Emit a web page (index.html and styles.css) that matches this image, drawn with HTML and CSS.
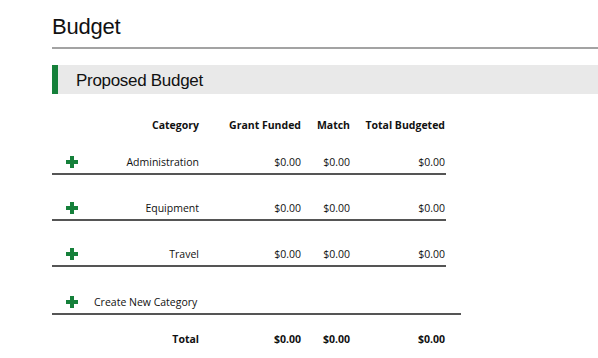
FILE: index.html
```html
<!DOCTYPE html>
<html>
<head>
<meta charset="utf-8">
<link rel="stylesheet" href="styles.css">
</head>
<body>
<div class="page">
  <h1 class="title">Budget</h1>
  <hr class="rule">
  <h2 class="section">Proposed Budget</h2>
  <div class="table">
    <div class="row head">
      <span></span>
      <span class="cat">Category</span>
      <span class="num">Grant Funded</span>
      <span class="num">Match</span>
      <span class="num">Total Budgeted</span>
    </div>
    <div class="row data first">
      <span class="plus"></span>
      <span class="cat">Administration</span>
      <span class="num">$0.00</span>
      <span class="num">$0.00</span>
      <span class="num">$0.00</span>
    </div>
    <div class="row data">
      <span class="plus"></span>
      <span class="cat">Equipment</span>
      <span class="num">$0.00</span>
      <span class="num">$0.00</span>
      <span class="num">$0.00</span>
    </div>
    <div class="row data">
      <span class="plus"></span>
      <span class="cat">Travel</span>
      <span class="num">$0.00</span>
      <span class="num">$0.00</span>
      <span class="num">$0.00</span>
    </div>
    <div class="row create">
      <span class="plus"></span>
      <span class="new">Create New Category</span>
    </div>
    <div class="row total">
      <span></span>
      <span class="cat">Total</span>
      <span class="num">$0.00</span>
      <span class="num">$0.00</span>
      <span class="num">$0.00</span>
    </div>
  </div>
</div>
</body>
</html>
```
FILE: styles.css
```css
html, body {
  margin: 0;
  padding: 0;
  background: #fff;
}
.page {
  padding: 13px 0 0 52px;
  overflow: hidden;
}
.title {
  margin: 0 0 6px 0;
  font-family: "Liberation Sans", Arial, sans-serif;
  font-weight: normal;
  font-size: 22px;
  letter-spacing: -0.2px;
  line-height: 28px;
  color: #111;
}
.rule {
  margin: 0;
  border: 0;
  height: 2px;
  background: #a3a3a3;
}
.section {
  margin: 16px 0 0 0;
  height: 29px;
  box-sizing: border-box;
  border-left: 6px solid #15803a;
  background: #e9e9e9;
  padding: 2px 0 0 18px;
  font-family: "Liberation Sans", Arial, sans-serif;
  font-weight: normal;
  font-size: 17px;
  letter-spacing: -0.3px;
  line-height: 27px;
  color: #111;
}
.table {
  font-family: "Open Sans", sans-serif;
  font-size: 10.5px;
  color: #111;
  margin-top: 23px;
}
.row {
  display: grid;
  grid-template-columns: 40px 107px 102px 49px 95px;
  width: 394px;
  align-items: center;
  line-height: 16px;
}
.head {
  font-weight: bold;
}
.data, .create {
  margin-top: 25px;
  padding-bottom: 3px;
  border-bottom: 2px solid #555;
}
.data.first {
  margin-top: 21px;
}
.create {
  margin-top: 27px;
  width: 409px;
  grid-template-columns: 42px auto;
}
.total {
  margin-top: 16px;
  font-weight: bold;
}
.cat, .num {
  text-align: right;
}
.plus {
  width: 12px;
  height: 12px;
  margin-left: 14px;
  background:
    linear-gradient(#15803a, #15803a) center / 4px 12px no-repeat,
    linear-gradient(#15803a, #15803a) center / 12px 4px no-repeat;
}
```
